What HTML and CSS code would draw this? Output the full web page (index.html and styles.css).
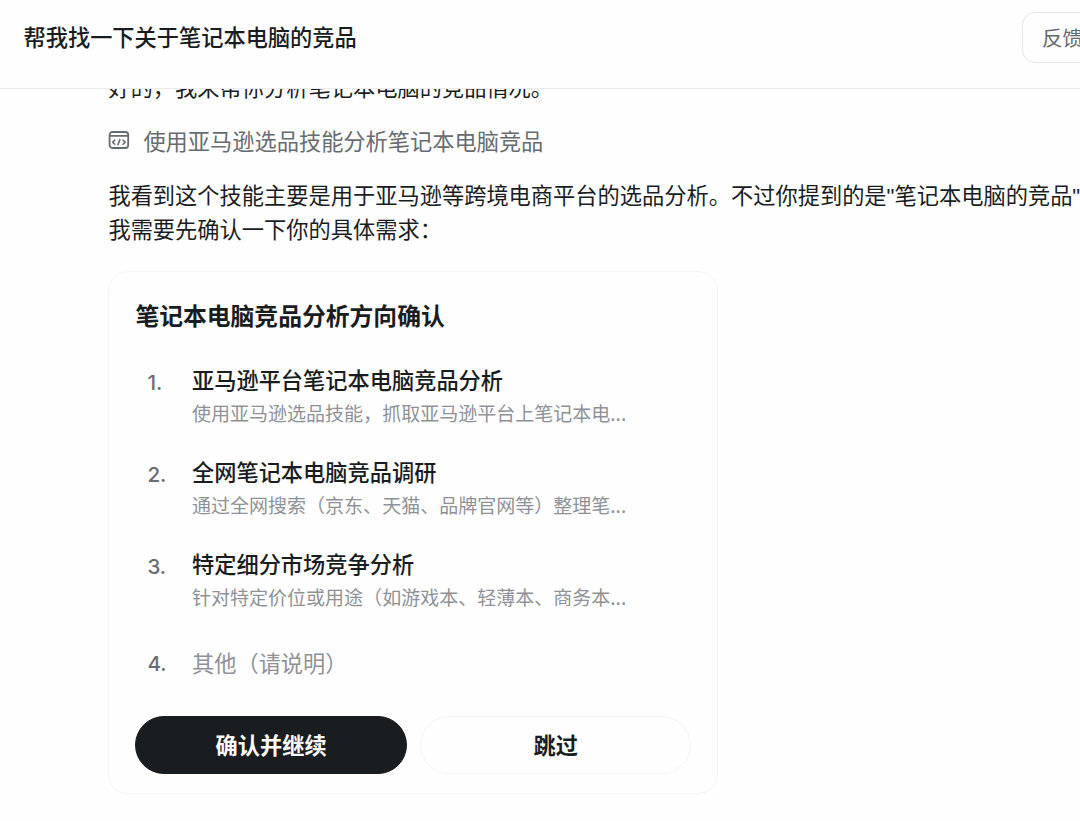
FILE: index.html
```html
<!DOCTYPE html>
<html lang="zh-CN">
<head>
    <meta charset="UTF-8">
    <meta name="viewport" content="width=device-width, initial-scale=1.0">
    <title>帮我找一下关于笔记本电脑的竞品</title>
    <link rel="stylesheet" href="styles.css">
</head>
<body>
    <header class="topbar">
        <h1 class="topbar-title">帮我找一下关于笔记本电脑的竞品</h1>
        <button type="button" class="feedback">反馈</button>
    </header>

    <main class="chat">
        <p class="message first">好的，我来帮你分析笔记本电脑的竞品情况。</p>

        <div class="skill">
            <svg class="skill-icon" width="22" height="20" viewBox="0 0 22 20" fill="none" stroke="currentColor" stroke-width="1.8" stroke-linecap="round" stroke-linejoin="round">
                <rect x="1.6" y="2" width="18.6" height="16" rx="2.8"/>
                <path d="M1.6 5.8h18.6"/>
                <path stroke-width="1.6" d="M6.8 10L4.7 12.1l2.1 2.1M15 10l2.1 2.1-2.1 2.1M11.9 9.7l-1.9 4.9"/>
            </svg>
            <span>使用亚马逊选品技能分析笔记本电脑竞品</span>
        </div>

        <p class="message">我看到这个技能主要是用于亚马逊等跨境电商平台的选品分析。不过你提到的是"笔记本电脑的竞品"<br>我需要先确认一下你的具体需求：</p>

        <section class="card">
            <h2 class="card-title">笔记本电脑竞品分析方向确认</h2>
            <div class="options">
                <div class="option">
                    <span class="num">1.</span>
                    <div class="option-text">
                        <div class="option-title">亚马逊平台笔记本电脑竞品分析</div>
                        <div class="option-desc">使用亚马逊选品技能，抓取亚马逊平台上笔记本电...</div>
                    </div>
                </div>
                <div class="option">
                    <span class="num">2.</span>
                    <div class="option-text">
                        <div class="option-title">全网笔记本电脑竞品调研</div>
                        <div class="option-desc">通过全网搜索（京东、天猫、品牌官网等）整理笔...</div>
                    </div>
                </div>
                <div class="option">
                    <span class="num">3.</span>
                    <div class="option-text">
                        <div class="option-title">特定细分市场竞争分析</div>
                        <div class="option-desc">针对特定价位或用途（如游戏本、轻薄本、商务本...</div>
                    </div>
                </div>
                <div class="option other">
                    <span class="num">4.</span>
                    <div class="option-other">其他（请说明）</div>
                </div>
            </div>
            <div class="actions">
                <button type="button" class="btn btn-primary">确认并继续</button>
                <button type="button" class="btn">跳过</button>
            </div>
        </section>
    </main>
</body>
</html>
```
FILE: styles.css
```css
* {
    box-sizing: border-box;
}
body {
    margin: 0;
    height: 821px;
    overflow: hidden;
    background: #fefefe;
    color: #1a1d1f;
    font-family: "Liberation Sans", "Noto Sans CJK SC", sans-serif;
    font-size: 22.22px;
    display: flex;
    flex-direction: column;
}
h1, h2, p {
    margin: 0;
}
button {
    font-family: "Noto Sans CJK SC", sans-serif;
    cursor: pointer;
}
.topbar {
    flex: none;
    height: 89px;
    padding: 12px 0 0 23.5px;
    border-bottom: 1px solid #ebebec;
    display: flex;
    align-items: flex-start;
    justify-content: space-between;
    overflow: hidden;
}
.topbar-title {
    font-family: "Noto Sans CJK SC", sans-serif;
    font-size: 22.22px;
    font-weight: 500;
    line-height: 49px;
    white-space: nowrap;
}
.feedback {
    flex: none;
    width: 82px;
    height: 51px;
    margin-right: -24px;
    padding: 0 1px 2px 0;
    border: 1px solid #e6e6e7;
    border-radius: 13px;
    background: #fefefe;
    color: #66696d;
    font-size: 20.6px;
}
.chat {
    flex: 1;
    min-height: 0;
    padding-left: 108.4px;
    overflow: hidden;
}
.message {
    font-size: 22.24px;
    line-height: 34px;
    white-space: nowrap;
}
.message.first {
    margin-top: -17px;
}
.skill {
    display: flex;
    align-items: center;
    gap: 13px;
    height: 34px;
    margin: 17px 0 23px;
    color: #676c71;
}
.card {
    width: 610px;
    height: 523px;
    margin-top: 23px;
    padding: 26px;
    border: 1px solid #f5f5f6;
    border-radius: 20px;
}
.card-title {
    font-family: "Noto Sans CJK SC", sans-serif;
    font-size: 23.8px;
    font-weight: 700;
    line-height: 34px;
}
.options {
    margin-top: 29px;
    font-family: "Noto Sans CJK SC", sans-serif;
}
.option {
    display: flex;
    height: 92px;
    padding-left: 12px;
}
.num {
    width: 44.6px;
    color: #686d72;
    font-family: Inter, sans-serif;
    font-size: 20.6px;
    font-weight: 500;
    line-height: 44px;
}
.option-title {
    font-weight: 500;
    line-height: 36px;
}
.option-desc {
    color: #8e9297;
    font-size: 19.03px;
    line-height: 31px;
}
.option.other {
    height: 79px;
    padding-top: 5px;
}
.option-other {
    color: #8e9297;
    line-height: 40px;
}
.actions {
    display: flex;
    gap: 13px;
}
.btn {
    flex: 1;
    height: 58px;
    padding: 0 0 2px;
    border: 1px solid #f5f5f6;
    border-radius: 29px;
    background: transparent;
    color: #1a1d1f;
    font-size: 22.22px;
    font-weight: 700;
}
.btn-primary {
    border-color: #1a1d1f;
    background: #1a1d1f;
    color: #fefefe;
}
```
